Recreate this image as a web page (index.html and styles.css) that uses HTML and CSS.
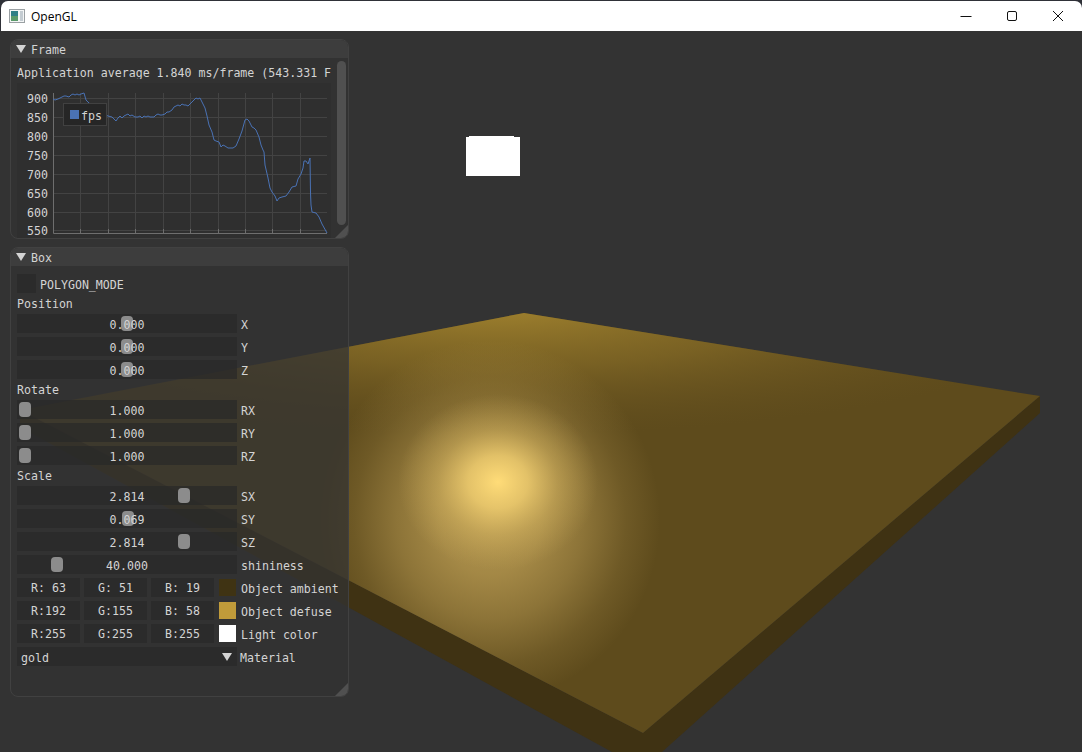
FILE: index.html
```html
<!DOCTYPE html>
<html lang="en">
<head>
    <meta charset="UTF-8">
    <title>OpenGL</title>
    <link rel="stylesheet" href="styles.css">
</head>
<body>
<div class="window">
    <div class="titlebar">
        <svg class="app_icon" width="16" height="14" viewBox="0 0 16 14">
            <rect x="0.5" y="0.5" width="15" height="13" fill="#f4f6f6" stroke="#9aa0a3"/>
            <rect x="2" y="2" width="7" height="10" fill="#2f7f86"/>
            <rect x="2" y="7" width="7" height="5" fill="#5a9a6a"/>
            <rect x="11" y="2" width="3" height="10" fill="#c4ccd2"/>
        </svg>
        <span class="app_name">OpenGL</span>
        <div class="controls">
            <svg width="12" height="12" viewBox="0 0 12 12"><path d="M0.5 6.5H11.5" stroke="#111" fill="none"/></svg>
            <svg width="12" height="12" viewBox="0 0 12 12"><rect x="1.5" y="1.5" width="9" height="9" rx="1.5" stroke="#111" fill="none"/></svg>
            <svg width="12" height="12" viewBox="0 0 12 12"><path d="M1 1L11 11M11 1L1 11" stroke="#111" fill="none"/></svg>
        </div>
    </div>

    <div class="viewport">
        <!-- 3d scene -->
        <svg class="scene" width="1082" height="721" viewBox="0 31 1082 721">
            <defs>
                <radialGradient id="farGlow" cx="0" cy="0" r="1" gradientUnits="userSpaceOnUse" gradientTransform="translate(500 300) scale(600 135)">
                    <stop offset="0" stop-color="#a58630" stop-opacity="1"/>
                    <stop offset="0.5" stop-color="#8a6f28" stop-opacity="0.6"/>
                    <stop offset="1" stop-color="#6b5520" stop-opacity="0"/>
                </radialGradient>
                <radialGradient id="wideSpot" cx="0" cy="0" r="1" gradientUnits="userSpaceOnUse" gradientTransform="translate(490 520) scale(170 180)">
                    <stop offset="0" stop-color="#bfa056" stop-opacity="0.85"/>
                    <stop offset="0.3" stop-color="#bfa056" stop-opacity="0.72"/>
                    <stop offset="0.55" stop-color="#bfa056" stop-opacity="0.48"/>
                    <stop offset="0.8" stop-color="#bfa056" stop-opacity="0.17"/>
                    <stop offset="1" stop-color="#bfa056" stop-opacity="0"/>
                </radialGradient>
                <radialGradient id="spot" cx="0" cy="0" r="1" gradientUnits="userSpaceOnUse" gradientTransform="translate(498 482) scale(100 88)">
                    <stop offset="0" stop-color="#ffdc78" stop-opacity="1"/>
                    <stop offset="0.3" stop-color="#f5d272" stop-opacity="0.78"/>
                    <stop offset="0.6" stop-color="#e4c268" stop-opacity="0.38"/>
                    <stop offset="1" stop-color="#d0b05e" stop-opacity="0"/>
                </radialGradient>
            </defs>
            <polygon points="20,410 20,427 643,769 1040,413 1040,396 643,733" fill="#3f3213"/>
            <polygon points="524,313 1040,396 643,733 20,410" fill="#5e4b1c"/>
            <polygon points="524,313 1040,396 643,733 20,410" fill="url(#farGlow)"/>
            <polygon points="524,313 1040,396 643,733 20,410" fill="url(#wideSpot)"/>
            <polygon points="524,313 1040,396 643,733 20,410" fill="url(#spot)"/>
            <polygon points="466,137 469,137 469,136 514,136 514,137 520,137 520,176 466,176" fill="#fff"/>
        </svg>

        <div class="panel frame_panel">
            <div class="panel_title"><i class="arrow"></i><span>Frame</span></div>
            <div class="panel_body">
                <div class="fps_text">Application average 1.840 ms/frame (543.331 F</div>
                <div class="plot">
                    <svg width="314" height="155" viewBox="17 83 314 155">
                        <g class="grid">
                            <path d="M53 98.5H327M53 117.5H327M53 136.5H327M53 155.5H327M53 174.5H327M53 193.5H327M53 212.5H327M53 230.5H327"/>
                            <path d="M80.5 93V233M108.5 93V233M135.5 93V233M163.5 93V233M190.5 93V233M218.5 93V233M245.5 93V233M272.5 93V233M300.5 93V233"/>
                        </g>
                        <path class="axis" d="M53.5 93V233.5H327M80.5 229V233M108.5 229V233M135.5 229V233M163.5 229V233M190.5 229V233M218.5 229V233M245.5 229V233M272.5 229V233M300.5 229V233"/>
                        <g class="ticks">
                            <text x="48" y="103">900</text>
                            <text x="48" y="122">850</text>
                            <text x="48" y="141">800</text>
                            <text x="48" y="160">750</text>
                            <text x="48" y="179">700</text>
                            <text x="48" y="198">650</text>
                            <text x="48" y="217">600</text>
                            <text x="48" y="235">550</text>
                        </g>
                        <polyline class="line" points="53,99 55,100 58,99 60,98 62,97 64,96 66,96 69,97 71,95 73,94 75,95 77,94 79,95 81,94 84,93 86,100 89,103 95,108 100,112 108,116 112,117 114,119 116,121 118,118 120,116 122,118 124,116 126,115 128,114 130,116 132,115 135,117 138,117 140,116 142,118 144,116 146,117 148,116 150,117 154,117 156,115 158,114 160,115 162,115 165,114 167,112 169,112 172,110 174,107 176,106 178,105 180,106 182,104 184,105 186,105 188,106 190,104 192,102 194,100 196,98 198,99 200,98 203,104 205,108 207,116 209,125 212,132 214,140 216,141 219,142 221,147 223,145 225,146 228,148 233,148 236,146 239,139 242,131 245,120 247,119 249,121 252,127 254,128 256,130 259,137 261,145 263,150 264,152 265,165 268,178 270,188 272,192 275,196 277,201 279,198 282,197 286,196 289,192 292,187 296,186 298,179 301,174 303,168 304,161 306,161 308,164 310,158 310.5,193 311,205 312,212 316,213 319,217 322,224 327,233"/>
                    </svg>
                    <div class="legend"><i class="legend_mark"></i><span>fps</span></div>
                </div>
            </div>
            <div class="scrollbar"></div>
            <div class="grip"></div>
        </div>

        <div class="panel box_panel">
            <div class="panel_title"><i class="arrow"></i><span>Box</span></div>
            <div class="panel_body">
                <div class="row"><div class="check"></div><span class="check_label">POLYGON_MODE</span></div>

                <div class="heading">Position</div>
                <div class="row"><div class="slider"><i class="thumb" style="left: 104px"></i><span>0.000</span></div><span class="name">X</span></div>
                <div class="row"><div class="slider"><i class="thumb" style="left: 104px"></i><span>0.000</span></div><span class="name">Y</span></div>
                <div class="row"><div class="slider"><i class="thumb" style="left: 104px"></i><span>0.000</span></div><span class="name">Z</span></div>

                <div class="heading">Rotate</div>
                <div class="row"><div class="slider"><i class="thumb" style="left: 2px"></i><span>1.000</span></div><span class="name">RX</span></div>
                <div class="row"><div class="slider"><i class="thumb" style="left: 2px"></i><span>1.000</span></div><span class="name">RY</span></div>
                <div class="row"><div class="slider"><i class="thumb" style="left: 2px"></i><span>1.000</span></div><span class="name">RZ</span></div>

                <div class="heading">Scale</div>
                <div class="row"><div class="slider"><i class="thumb" style="left: 161px"></i><span>2.814</span></div><span class="name">SX</span></div>
                <div class="row"><div class="slider"><i class="thumb" style="left: 105px"></i><span>0.069</span></div><span class="name">SY</span></div>
                <div class="row"><div class="slider"><i class="thumb" style="left: 161px"></i><span>2.814</span></div><span class="name">SZ</span></div>
                <div class="row"><div class="slider"><i class="thumb" style="left: 34px"></i><span>40.000</span></div><span class="name">shininess</span></div>

                <div class="row">
                    <div class="rgb"><span>R: 63</span><span>G: 51</span><span>B: 19</span></div>
                    <i class="swatch" style="background: #3f3313"></i><span class="name">Object ambient</span>
                </div>
                <div class="row">
                    <div class="rgb"><span>R:192</span><span>G:155</span><span>B: 58</span></div>
                    <i class="swatch" style="background: #c09b3a"></i><span class="name">Object defuse</span>
                </div>
                <div class="row">
                    <div class="rgb"><span>R:255</span><span>G:255</span><span>B:255</span></div>
                    <i class="swatch" style="background: #ffffff"></i><span class="name">Light color</span>
                </div>

                <div class="row">
                    <div class="combo"><span>gold</span><i class="arrow"></i></div>
                    <span class="name">Material</span>
                </div>
            </div>
            <div class="grip"></div>
        </div>
    </div>
</div>
</body>
</html>
```

FILE: styles.css
```css
* {
    margin: 0;
    padding: 0;
    box-sizing: border-box;
}

html, body {
    width: 1082px;
    height: 752px;
    overflow: hidden;
    background-color: #2f3138;
}

.window {
    width: 1082px;
    height: 752px;
    padding-left: 1px;
    display: flex;
    flex-direction: column;
}

.titlebar {
    height: 30px;
    flex: none;
    display: flex;
    align-items: center;
    padding-left: 8px;
    background-color: #ffffff;
    border-radius: 7px 7px 0 0;
    margin-top: 1px;
    font-family: "Open Sans", sans-serif;
    font-size: 12px;
    color: #000000;
}

.app_icon {
    margin-right: 6px;
}

.controls {
    margin-left: auto;
    display: flex;
    gap: 34px;
    padding-right: 18px;
}

.viewport {
    position: relative;
    flex: 1;
    margin-left: -1px;
    overflow: hidden;
    background-color: #333333;
    font-family: "DejaVu Sans Mono", monospace;
    font-size: 11.6px;
    color: #d4d4d4;
}

.scene {
    position: absolute;
    left: 0;
    top: 0;
}

.panel {
    position: absolute;
    left: 10px;
    width: 339px;
    overflow: hidden;
    background-color: rgba(51, 51, 51, 0.75);
    border: 1px solid #414141;
    border-radius: 8px;
}

.frame_panel {
    top: 8px;
    height: 200px;
}

.box_panel {
    top: 216px;
    height: 450px;
}

.panel_title {
    height: 18px;
    display: flex;
    align-items: center;
    padding-left: 5px;
    background-color: #3d3d3d;
    gap: 5px;
}

/* text sits one pixel low in its box, as in the reference font */
.panel_title span,
.legend span,
.check_label,
.slider span,
.name,
.combo span {
    padding-top: 2px;
}

.arrow {
    display: block;
    width: 0;
    height: 0;
    border-left: 5px solid transparent;
    border-right: 5px solid transparent;
    border-top: 8px solid #d4d4d4;
}

.panel_body {
    padding: 8px 6px 0;
    display: flex;
    flex-direction: column;
    gap: 4px;
}

.fps_text {
    width: 314px;
    height: 13px;
    line-height: 15px;
    white-space: nowrap;
    overflow: hidden;
}

.plot {
    position: relative;
    width: 314px;
    height: 155px;
    background-color: rgba(46, 46, 46, 0.7);
}

.plot svg {
    display: block;
}

.grid path {
    stroke: #434343;
    fill: none;
}

.axis {
    stroke: #6e6e6e;
    fill: none;
}

.ticks text {
    fill: #d4d4d4;
    text-anchor: end;
}

.line {
    stroke: #4a72b4;
    stroke-width: 1;
    fill: none;
}

.legend {
    position: absolute;
    left: 46px;
    top: 20px;
    width: 44px;
    height: 23px;
    display: flex;
    align-items: center;
    gap: 2px;
    padding-left: 6px;
    background-color: #262626;
    border: 1px solid #414141;
}

.legend_mark {
    width: 9px;
    height: 9px;
    background-color: #4a72b4;
}

.scrollbar {
    position: absolute;
    right: 2px;
    top: 21px;
    width: 9px;
    height: 164px;
    background-color: #505050;
    border-radius: 5px;
}

.grip {
    position: absolute;
    right: 0;
    bottom: 0;
    width: 13px;
    height: 13px;
    background-color: #505050;
    clip-path: polygon(100% 0, 100% 100%, 0 100%);
}

.row {
    display: flex;
    align-items: center;
    height: 19px;
}

.heading {
    height: 13px;
    line-height: 15px;
}

.check {
    width: 19px;
    height: 19px;
    background-color: rgba(40, 40, 40, 0.7);
}

.check_label {
    margin-left: 4px;
}

.slider {
    position: relative;
    width: 220px;
    height: 19px;
    display: flex;
    align-items: center;
    justify-content: center;
    background-color: rgba(40, 40, 40, 0.7);
}

.slider span {
    position: relative;
}

.thumb {
    position: absolute;
    top: 2px;
    width: 12px;
    height: 15px;
    background-color: #8c8c8c;
    border-radius: 4px;
}

.name {
    margin-left: 4px;
    white-space: nowrap;
}

.rgb {
    width: 197px;
    display: flex;
    gap: 4px;
}

.rgb span {
    flex: 1;
    height: 19px;
    line-height: 21px;
    text-align: center;
    background-color: rgba(40, 40, 40, 0.7);
}

.swatch {
    width: 17px;
    height: 17px;
    margin-left: 5px;
    margin-right: 1px;
}

.combo {
    width: 220px;
    height: 19px;
    display: flex;
    align-items: center;
    justify-content: space-between;
    padding: 0 5px 0 4px;
    background-color: rgba(40, 40, 40, 0.7);
}

.combo + .name {
    margin-left: 3px;
}
```
